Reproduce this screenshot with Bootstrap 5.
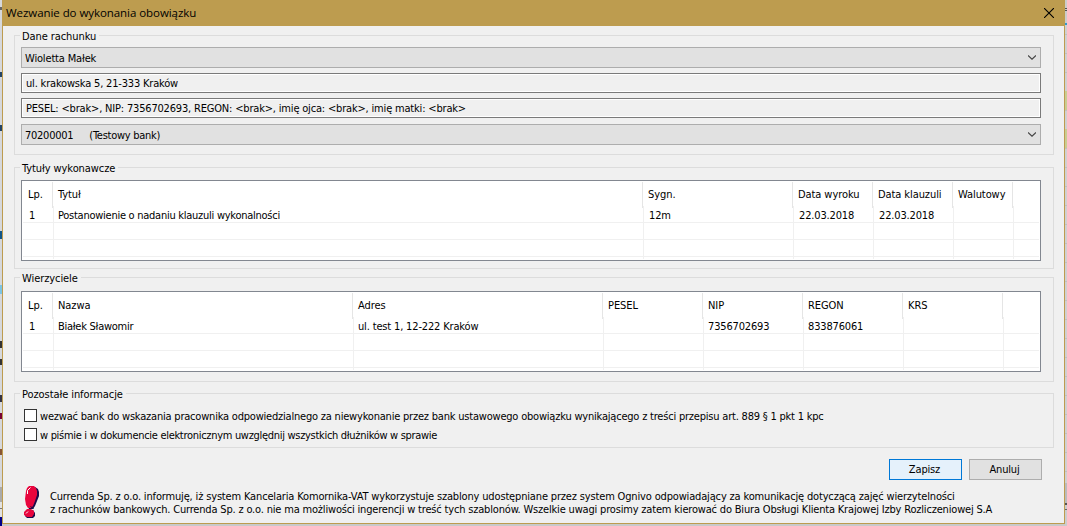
<!DOCTYPE html>
<html lang="pl">
<head>
<meta charset="utf-8">
<meta name="viewport" content="width=device-width, initial-scale=1">
<title>Wezwanie do wykonania obowiązku</title>
<link href="https://cdn.jsdelivr.net/npm/bootstrap@5.3.0/dist/css/bootstrap.min.css" rel="stylesheet">
<script src="https://cdn.jsdelivr.net/npm/bootstrap@5.3.0/dist/js/bootstrap.bundle.min.js"></script>
<style>
body{font-family:"DejaVu Sans Condensed","DejaVu Sans",sans-serif;font-stretch:condensed;font-size:11px;line-height:13px;color:#000;height:526px;overflow:hidden;letter-spacing:-.16px;white-space:nowrap;background:#c9c9c9}
/* strips of the window behind the dialog */
.behind{height:526px}
.edge-left{width:2px;background:linear-gradient(#0000 7px,#666 7px 10px,#0000 10px 72px,#246 72px 77px,#0000 77px 125px,#246 125px 131px,#0000 131px 231px,#158 231px 239px,#0000 239px 285px,#7cc4e4 285px 294px,#0000 294px 341px,#333 341px 348px,#0000 348px 359px,#333 359px 365px,#0000 365px 395px,#334 395px 402px,#0000 402px 413px,#703 413px 419px,#0000 419px 449px,#853 449px 455px,#0000 455px 487px,#aaa 487px 502px,#e2e2e2 502px 508px,#777 508px 509px,#e2e2e2 509px 517px,#008 517px) #d6d8dc}
.edge-right{width:2px;background:linear-gradient(#ccc 8px,#555 8px 9px,#ccc 9px 10px,#555 10px 11px,#ccc 11px 23px,#39c 23px 25px,#0000 25px 91px,#c9cd91 91px 110px,#0000 110px 129px,#c9cd91 129px 148px,#0000 148px 483px,#bbb 483px 503px,#555 503px 505px,#ccc 505px 509px,#666 509px 510px,#ccc 510px),repeating-linear-gradient(#d0d0d0 0 15px,#c0c0c0 15px 16px,#d0d0d0 16px 19px)}
.dialog{width:1063px;height:524px;background:#f0f0f0;border:1px solid #bd9c4f;border-top:0}
.titlebar{height:26px;background:#bd9c4f;padding:0 10px 0 3px;font:11.5px/26px "Open Sans","Noto Sans",sans-serif;letter-spacing:-.06px}
.group{border:1px solid #dcdcdc;margin:0 10px 0 11px;padding:0 12px 0 6px}
.group-title{font-size:11px;line-height:15px;height:13px;width:fit-content;margin:-7px 0 5px -1px;padding:0 3px 0 2px;background:#f0f0f0;letter-spacing:-.08px}
.g-account{margin-top:9px;height:120px}
.g-titles{margin-top:12px;height:102px}
.g-creditors{margin-top:8px;height:105px}
.g-other{margin-top:11px;height:55px;padding-left:9px}
.g-other .group-title{margin-left:-4px;margin-bottom:9px}
.combo{height:21px;border:1px solid #adadad;background:#e1e1e1;padding:0 4px 0 3px}
.combo span{line-height:19px;padding-top:1px}
.field{height:20px;border:1px solid #7a7a7a;box-shadow:inset 0 0 0 1px #fff;padding:0 4px;margin-top:5px;letter-spacing:-.18px}
.field+.combo{margin-top:6px;letter-spacing:-.26px}
.list-box{border:1px solid #828790;background:#fff;height:81px;padding:1px;margin-top:6px}
.g-creditors .list-box{margin-top:7px}
.cols{display:grid;grid-template-columns:var(--first) var(--rest) 1fr}
.g-titles{--rest:590px 150px 80px 80px 60px}
.g-creditors{--rest:300px 250px 100px 100px 100px 100px}
.list-head{--first:30px;height:24px;line-height:26px;letter-spacing:-.08px}
.list-body{--first:31px;height:53px;grid-template-rows:17px 17px 17px 2px}
.list-head>div{border-right:1px solid #e5e5e5;padding-left:5px}
.list-body>div{border-right:1px solid #f0f0f0;border-bottom:1px solid #f0f0f0;padding-left:5px;line-height:20px}
.list-body>div:first-child{padding-left:6px}
.list-body>div:nth-child(2),.g-creditors .list-body>div:nth-child(n+3){padding-left:4px}
.list-head>div:last-child,.list-body>.end{border-right:0}
.list-body>.cut{border-bottom:0}
.check{height:13px;letter-spacing:-.205px}
.check+.check{margin-top:6px;letter-spacing:-.3px}
.check-square{width:13px;height:13px;border:1px solid #333;background:#fff;margin-right:3px}
.check-label{padding-top:1px}
.buttons{margin:11px 22px 0 0;gap:7px}
.win-btn{width:73px;height:21px;border:1px solid #adadad;background:#e1e1e1;border-radius:0;padding:1px 2px 0 0;font-size:11px;line-height:18px;letter-spacing:-.16px;color:#000}
.win-btn.main-action{border-color:#0078d7;background:#e5f1fb}
.notice{margin:6px 0 0 21px}
.notice-text{margin:4px 0 0 10px}
.notice-text div+div{letter-spacing:-.18px}
.tight{letter-spacing:-.26px}
</style>
</head>
<body>
<div class="behind d-flex">
<div class="edge-left"></div>
<main class="dialog">
  <header class="titlebar d-flex align-items-center justify-content-between">
    <span>Wezwanie do wykonania obowiązku</span>
    <svg width="10" height="10" viewBox="0 0 10 10" stroke="#000" stroke-width="1.1" fill="none"><path d="M0 0 10 10M10 0 0 10"/></svg>
  </header>

  <section class="group g-account">
    <div class="group-title">Dane rachunku</div>
    <div class="combo d-flex align-items-center justify-content-between"><span>Wioletta Małek</span><svg width="8" height="5" viewBox="0 0 8 5" stroke="#444" stroke-width="1.2" fill="none"><path d="M0 .5 4 4.2 8 .5"/></svg></div>
    <div class="field d-flex align-items-center">ul. krakowska 5, 21-333 Kraków</div>
    <div class="field d-flex align-items-center">PESEL: &lt;brak&gt;, NIP: 7356702693, REGON: &lt;brak&gt;, imię ojca: &lt;brak&gt;, imię matki: &lt;brak&gt;</div>
    <div class="combo d-flex align-items-center justify-content-between"><span>70200001<span class="ms-3">(Testowy bank)</span></span><svg width="8" height="5" viewBox="0 0 8 5" stroke="#444" stroke-width="1.2" fill="none"><path d="M0 .5 4 4.2 8 .5"/></svg></div>
  </section>

  <section class="group g-titles">
    <div class="group-title mb-0">Tytuły wykonawcze</div>
    <div class="list-box">
      <div class="cols list-head"><div>Lp.</div><div>Tytuł</div><div>Sygn.</div><div>Data wyroku</div><div>Data klauzuli</div><div>Walutowy</div><div></div></div>
      <div class="cols list-body">
        <div>1</div><div class="tight">Postanowienie o nadaniu klauzuli wykonalności</div><div>12m</div><div>22.03.2018</div><div>22.03.2018</div><div></div><div class="end"></div>
        <div></div><div></div><div></div><div></div><div></div><div></div><div class="end"></div>
        <div></div><div></div><div></div><div></div><div></div><div></div><div class="end"></div>
        <div class="cut"></div><div class="cut"></div><div class="cut"></div><div class="cut"></div><div class="cut"></div><div class="cut"></div><div class="cut end"></div>
      </div>
    </div>
  </section>

  <section class="group g-creditors">
    <div class="group-title mb-0">Wierzyciele</div>
    <div class="list-box">
      <div class="cols list-head"><div>Lp.</div><div>Nazwa</div><div>Adres</div><div>PESEL</div><div>NIP</div><div>REGON</div><div>KRS</div><div></div></div>
      <div class="cols list-body">
        <div>1</div><div class="tight">Białek Sławomir</div><div>ul. test 1, 12-222 Kraków</div><div></div><div>7356702693</div><div>833876061</div><div></div><div class="end"></div>
        <div></div><div></div><div></div><div></div><div></div><div></div><div></div><div class="end"></div>
        <div></div><div></div><div></div><div></div><div></div><div></div><div></div><div class="end"></div>
        <div class="cut"></div><div class="cut"></div><div class="cut"></div><div class="cut"></div><div class="cut"></div><div class="cut"></div><div class="cut"></div><div class="cut end"></div>
      </div>
    </div>
  </section>

  <section class="group g-other">
    <div class="group-title">Pozostałe informacje</div>
    <div class="check d-flex align-items-center"><span class="check-square"></span><span class="check-label">wezwać bank do wskazania pracownika odpowiedzialnego za niewykonanie przez bank ustawowego obowiązku wynikającego z treści przepisu art. 889 § 1 pkt 1 kpc</span></div>
    <div class="check d-flex align-items-center"><span class="check-square"></span><span class="check-label">w piśmie i w dokumencie elektronicznym uwzględnij wszystkich dłużników w sprawie</span></div>
  </section>

  <div class="buttons d-flex justify-content-end">
    <button class="btn win-btn main-action">Zapisz</button>
    <button class="btn win-btn">Anuluj</button>
  </div>

  <footer class="notice d-flex">
    <svg width="16" height="33" viewBox="0 0 16 33" class="flex-shrink-0">
      <path d="M5 1h6l3 2 1 3v4l-2 5-2 5-2 3H5l-2-4-1-7 1-8z" fill="#1c0b4a"/>
      <path d="M5 0h5l2 2 1 3v4l-2 6-2 5-2 2H4l-2-3-1-6 1-8 1-3z" fill="#e8053d"/>
      <path d="M4 24h5l2 3v3l-2 2H3l-2-2z" fill="#1c0b4a"/>
      <path d="M3 23h4l3 2v3l-2 3H3l-3-2v-3z" fill="#e8053d"/>
      <path d="M6.500 20.500 9.500 22.500" stroke="#1c0b4a"/>
      <path d="M3.500 8V4.500l3-3M2 27.500l2-2" stroke="#fff" fill="none"/>
    </svg>
    <div class="notice-text"><div>Currenda Sp. z o.o. informuję, iż system Kancelaria Komornika-VAT wykorzystuje szablony udostępniane przez system Ognivo odpowiadający za komunikację dotyczącą zajęć wierzytelności</div><div>z rachunków bankowych. Currenda Sp. z o.o. nie ma możliwości ingerencji w treść tych szablonów. Wszelkie uwagi prosimy zatem kierować do Biura Obsługi Klienta Krajowej Izby Rozliczeniowej S.A</div></div>
  </footer>
</main>
<div class="edge-right"></div>
</div>
</body>
</html>
